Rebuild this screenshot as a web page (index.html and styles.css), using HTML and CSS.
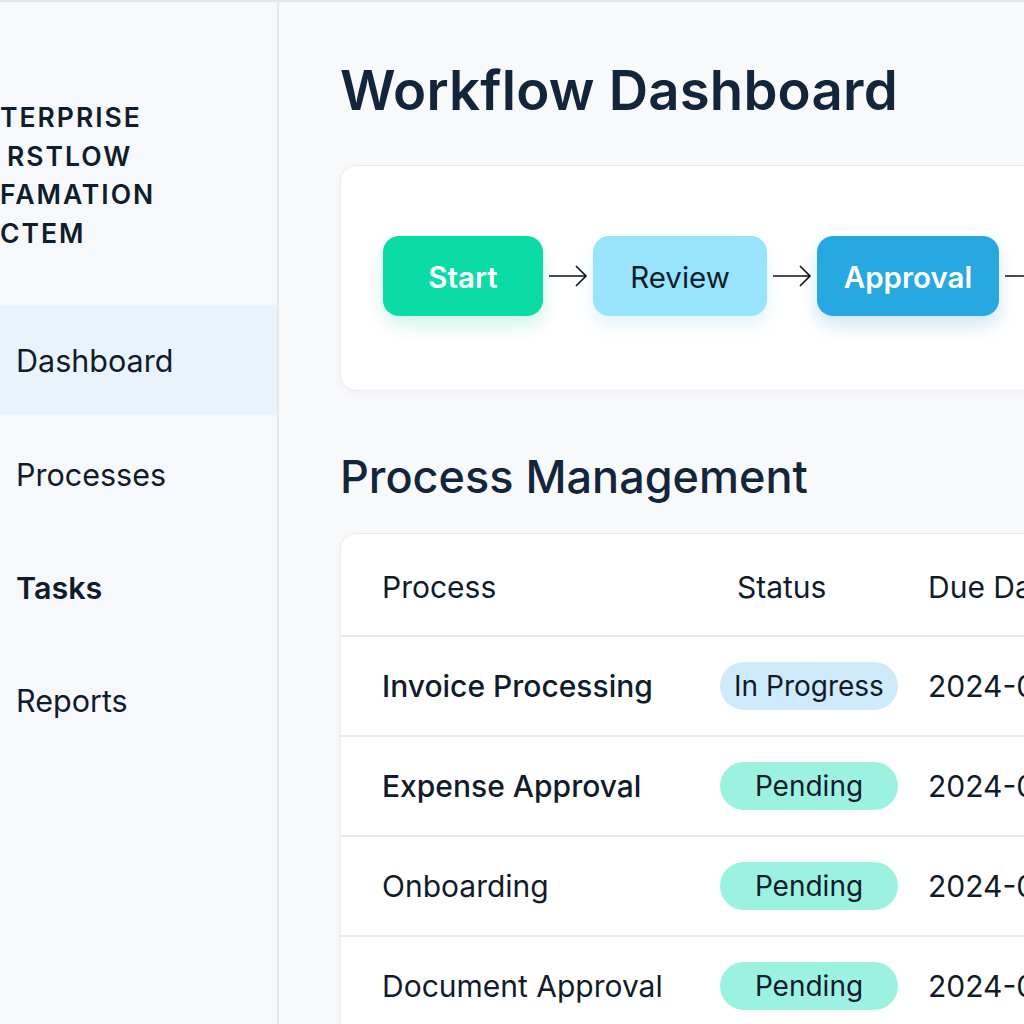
FILE: index.html
```html
<!DOCTYPE html>
<html lang="en">
<head>
<meta charset="utf-8">
<title>Workflow Dashboard</title>
<link rel="stylesheet" href="styles.css">
</head>
<body>
<div class="app">
  <aside class="sidebar">
    <div class="brand">
      <div class="brand-line">TERPRISE</div>
      <div class="brand-line indent">RSTLOW</div>
      <div class="brand-line">FAMATION</div>
      <div class="brand-line">CTEM</div>
    </div>
    <nav class="nav">
      <div class="nav-item active">Dashboard</div>
      <div class="nav-item">Processes</div>
      <div class="nav-item strong">Tasks</div>
      <div class="nav-item">Reports</div>
    </nav>
  </aside>
  <main class="main">
    <h1 class="page-title">Workflow Dashboard</h1>
    <section class="card flow-card">
      <div class="flow">
        <div class="node node-start">Start</div>
        <svg class="arrow" viewBox="0 0 40 24" width="40" height="24"><path d="M1 12H38M28 2L38 12L28 22" fill="none" stroke="#111" stroke-width="1.6"/></svg>
        <div class="node node-review">Review</div>
        <svg class="arrow" viewBox="0 0 40 24" width="40" height="24"><path d="M1 12H38M28 2L38 12L28 22" fill="none" stroke="#111" stroke-width="1.6"/></svg>
        <div class="node node-approval">Approval</div>
        <svg class="arrow" viewBox="0 0 40 24" width="40" height="24"><path d="M1 12H38M28 2L38 12L28 22" fill="none" stroke="#111" stroke-width="1.6"/></svg>
        <div class="node node-done">Done</div>
      </div>
    </section>
    <h2 class="section-title">Process Management</h2>
    <section class="card table-card">
      <div class="row head">
        <div class="c-name">Process</div>
        <div class="c-status">Status</div>
        <div class="c-date">Due Date</div>
      </div>
      <div class="row">
        <div class="c-name medium">Invoice Processing</div>
        <div class="c-status"><span class="pill progress">In Progress</span></div>
        <div class="c-date">2024-06-15</div>
      </div>
      <div class="row">
        <div class="c-name medium">Expense Approval</div>
        <div class="c-status"><span class="pill pending">Pending</span></div>
        <div class="c-date">2024-06-18</div>
      </div>
      <div class="row">
        <div class="c-name">Onboarding</div>
        <div class="c-status"><span class="pill pending">Pending</span></div>
        <div class="c-date">2024-06-20</div>
      </div>
      <div class="row">
        <div class="c-name">Document Approval</div>
        <div class="c-status"><span class="pill pending">Pending</span></div>
        <div class="c-date">2024-06-22</div>
      </div>
    </section>
  </main>
</div>
</body>
</html>
```
FILE: styles.css
```css
* { box-sizing: border-box; }
html, body {
  margin: 0;
  padding: 0;
  width: 1024px;
  height: 1024px;
  overflow: hidden;
}
body {
  font-family: Inter, "Noto Sans", "Liberation Sans", sans-serif;
  color: #111c2b;
  background: #f7f9fb;
  border-top: 2px solid #e3e6ea;
}
.app {
  display: flex;
  height: 1022px;
}
.sidebar {
  flex: none;
  width: 279px;
  background: #f6f8fb;
  border-right: 2px solid #e6e8ec;
  overflow: hidden;
}
.brand {
  padding-top: 96px;
  padding-bottom: 53px;
}
.brand-line {
  font-size: 26.5px;
  font-weight: 600;
  letter-spacing: 2px;
  line-height: 38.5px;
  color: #0f1d2c;
  white-space: nowrap;
}
.brand-line.indent { padding-left: 7px; }
.nav-item {
  height: 113px;
  display: flex;
  align-items: center;
  padding-left: 16px;
  font-size: 30.5px;
  color: #111c2b;
}
.nav-item.active {
  height: 110px;
  margin-bottom: 3px;
  background: #eaf3fb;
}
.nav-item.strong { font-weight: 600; }
.main {
  flex: none;
  width: 980px;
  padding: 55px 0 0 61px;
}
.page-title {
  margin: 0 0 42px;
  font-size: 54.5px;
  font-weight: 600;
  line-height: 66px;
  color: #13253a;
  letter-spacing: 0.2px;
}
.card {
  background: #ffffff;
  border: 1px solid #e9ecf0;
  border-radius: 16px;
  box-shadow: 0 2px 8px rgba(20, 40, 80, 0.03);
}
.flow-card {
  height: 226px;
  display: flex;
  align-items: center;
  padding-left: 42px;
  padding-bottom: 4px;
}
.flow {
  display: flex;
  align-items: center;
  gap: 3px;
}
.arrow { flex: none; margin: 0 2px; }
.node {
  height: 80px;
  border-radius: 16px;
  display: flex;
  align-items: center;
  justify-content: center;
  font-size: 29.5px;
  padding-top: 2px;
}
.node-start {
  width: 160px;
  background: #0bdba5;
  color: #fff;
  font-weight: 600;
  box-shadow: 0 10px 18px rgba(11, 200, 150, 0.18);
}
.node-review {
  width: 174px;
  background: #98e4fc;
  color: #0f1d2c;
  font-weight: 400;
  box-shadow: 0 10px 18px rgba(80, 180, 230, 0.15);
}
.node-approval {
  width: 182px;
  background: #27a8e0;
  color: #fff;
  font-weight: 600;
  box-shadow: 0 10px 18px rgba(30, 140, 210, 0.2);
}
.node-done {
  width: 150px;
  background: #0bdba5;
  color: #fff;
  font-weight: 600;
}
.section-title {
  margin: 58px 0 28px;
  font-size: 45px;
  font-weight: 500;
  line-height: 56px;
  color: #13253a;
}
.table-card {
  border-radius: 16px 16px 0 0;
}
.row {
  display: flex;
  align-items: center;
  height: 100px;
  border-top: 2px solid #e8eaee;
  font-size: 30px;
}
.row.head {
  border-top: none;
  height: 101px;
  padding-top: 4px;
}
.c-name {
  width: 379px;
  padding-left: 41px;
  flex: none;
}
.c-name.medium { font-weight: 500; }
.c-status {
  width: 208px;
  flex: none;
}
.row.head .c-status { padding-left: 17px; }
.c-date { flex: none; white-space: nowrap; }
.pill {
  display: inline-flex;
  align-items: center;
  justify-content: center;
  width: 178px;
  height: 48px;
  border-radius: 24px;
  font-size: 28px;
}
.pill.progress { background: #cfeafb; }
.pill.pending { background: #9cf2e1; }
```
